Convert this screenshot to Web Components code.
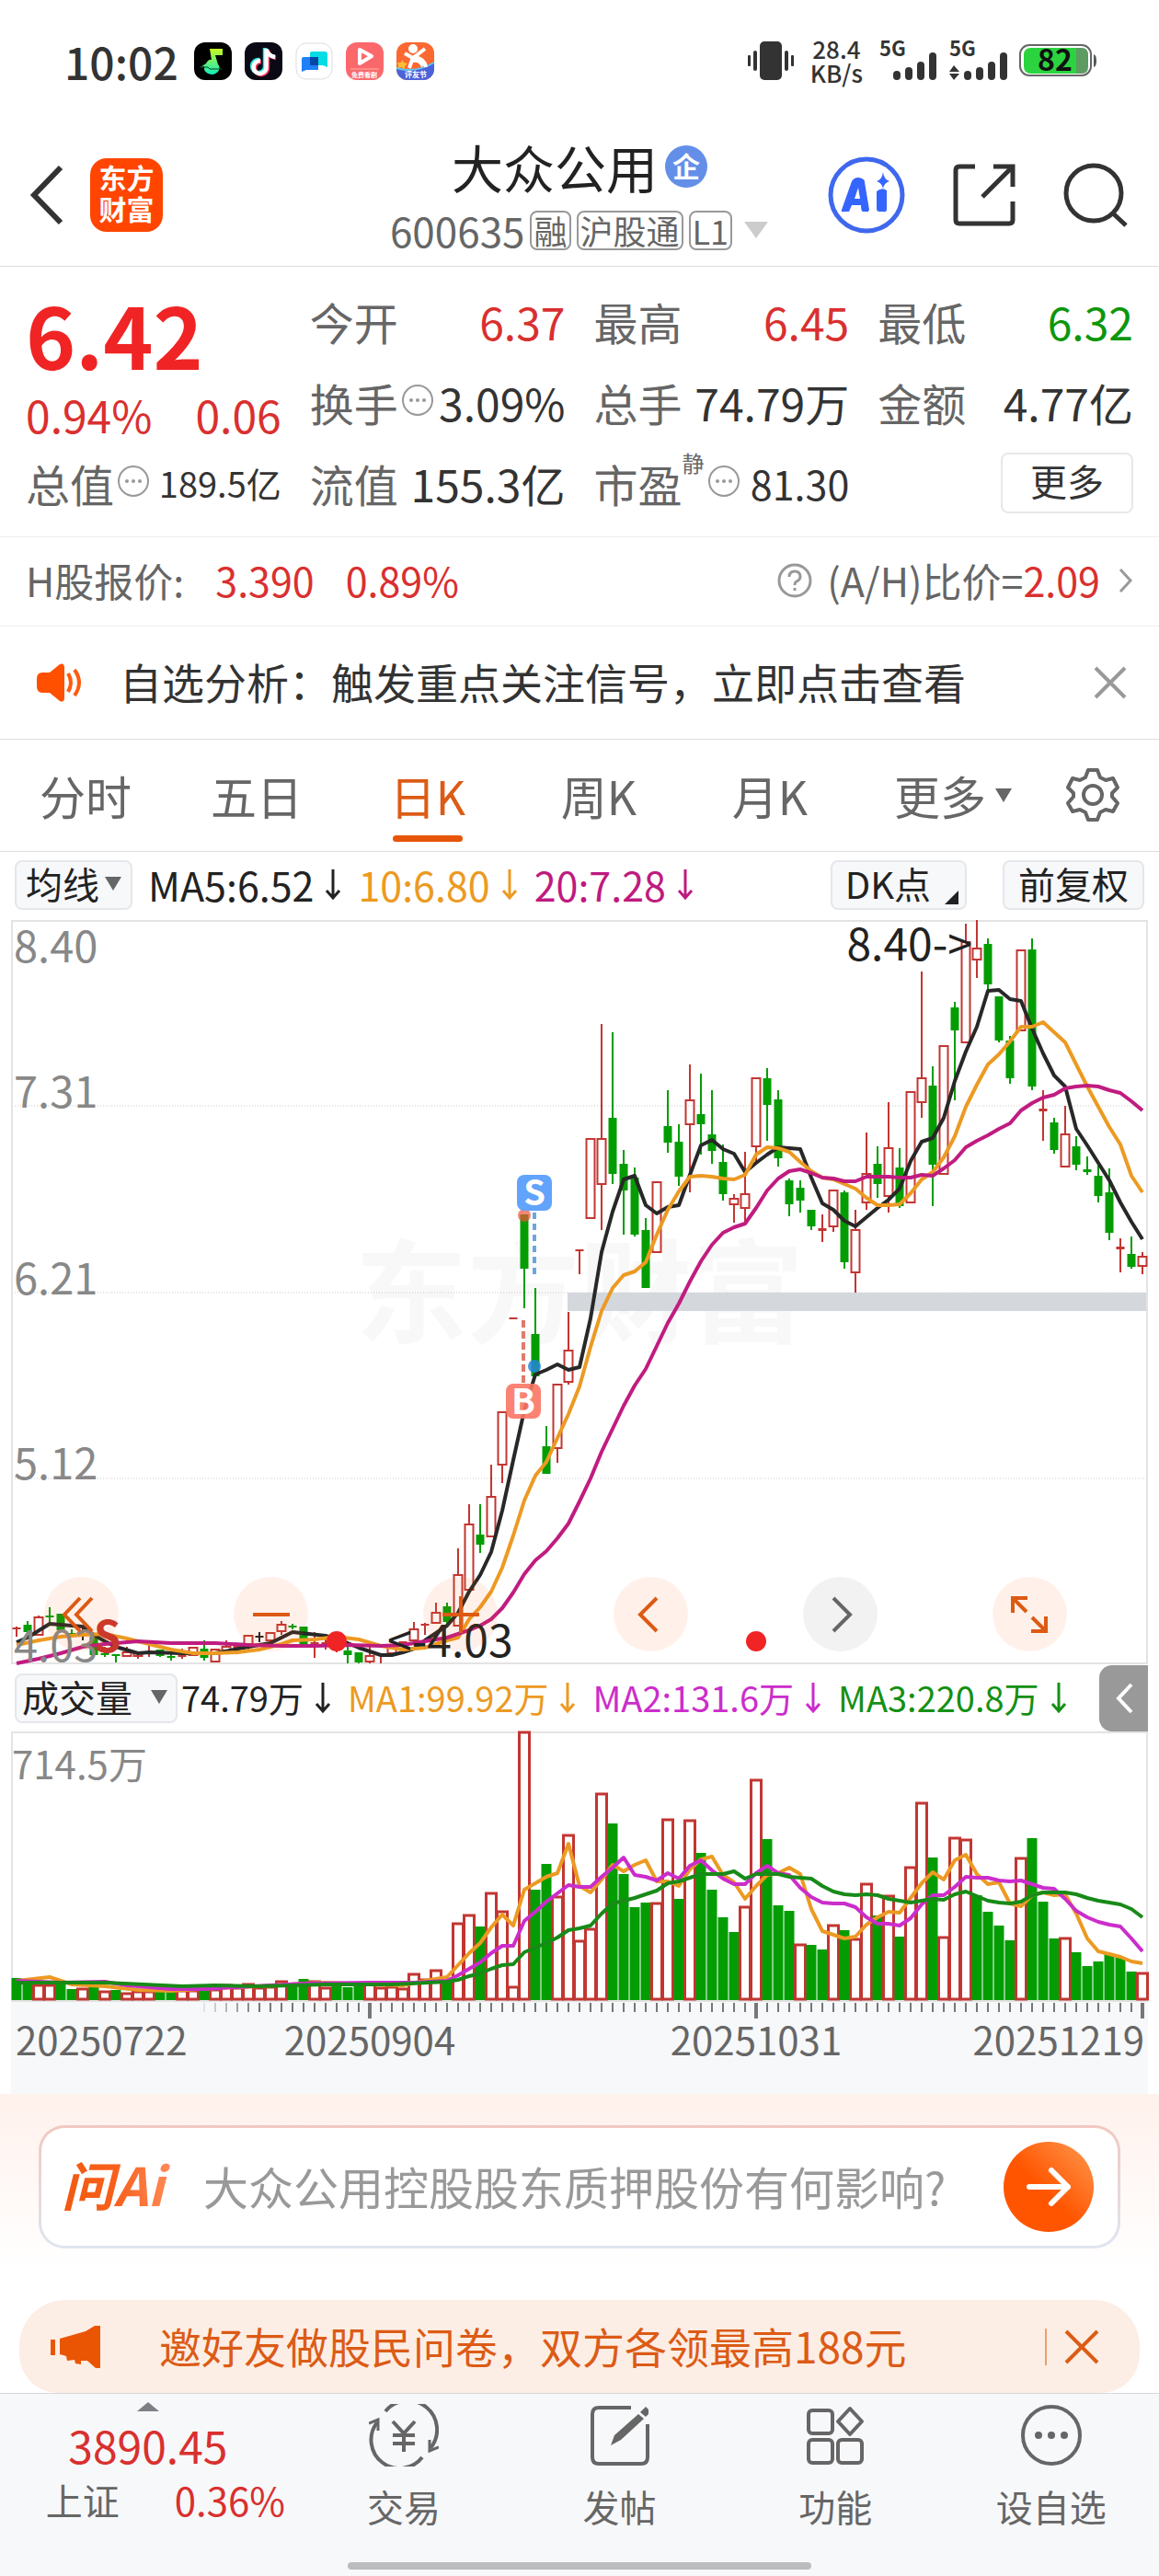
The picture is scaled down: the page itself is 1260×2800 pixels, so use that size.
<!DOCTYPE html>
<html lang="zh-CN">
<head>
<meta charset="utf-8">
<meta name="viewport" content="width=device-width, initial-scale=1">
<title>大众公用 600635</title>
<style>
    body {
        margin: 0;
        background: #fff;
        color: #333;
        font-family: "Noto Sans CJK SC", "Noto Sans", sans-serif;
        --up: #d9302f;
        --down: #0c960c;
        --label: #666;
        --accent: #dc5b16;
        --line: #ddd;
        --soft: #f7f8fa;
    }
</style>
</head>
<body>
<status-bar></status-bar>
<stock-header name="大众公用" code="600635"></stock-header>
<main>
    <quote-panel>
        <quote-item label="今开" tone="up">6.37</quote-item>
        <quote-item label="最高" tone="up">6.45</quote-item>
        <quote-item label="最低" tone="down">6.32</quote-item>
        <quote-item label="换手" info>3.09%</quote-item>
        <quote-item label="总手">74.79万</quote-item>
        <quote-item label="金额">4.77亿</quote-item>
        <quote-item label="总值" size="small" info>189.5亿</quote-item>
        <quote-item label="流值">155.3亿</quote-item>
        <quote-item label="市盈" note="静" size="medium" info>81.30</quote-item>
    </quote-panel>
    <h-share-row></h-share-row>
    <notice-bar>自选分析：触发重点关注信号，立即点击查看</notice-bar>
    <period-tabs></period-tabs>
    <ma-legend></ma-legend>
    <kline-chart></kline-chart>
    <volume-legend></volume-legend>
    <volume-chart></volume-chart>
    <ask-bar></ask-bar>
    <promo-banner>邀好友做股民问卷，双方各领最高188元</promo-banner>
</main>
<bottom-nav>
    <nav-item label="交易">
        <svg width="76" height="68" viewBox="0 0 76 68" fill="none" stroke="#666" stroke-width="4">
            <path d="M18 8A31 31 0 0 1 67 48M58 58A31 31 0 0 1 9 20"/>
            <path d="M0 21L10 17V29M76 47L66 51V39" stroke-width="3"/>
            <path d="M26 19L38 32L50 19M38 32V52M26 34H50M26 43H50"/>
        </svg>
    </nav-item>
    <nav-item label="发帖">
        <svg width="66" height="68" viewBox="0 0 66 68" fill="none" stroke="#666" stroke-width="4">
            <path d="M45 4H10Q3 4 3 11V58Q3 65 10 65H56Q63 65 63 58V22"/>
            <path d="M23 45L27 34L53 11L59 16L34 39Z" fill="#666" stroke="none"/>
            <path d="M55 9L61 3L64 6V11L61 14Z" fill="#666" stroke="none"/>
        </svg>
    </nav-item>
    <nav-item label="功能">
        <svg width="64" height="68" viewBox="0 0 64 68" fill="none" stroke="#666" stroke-width="4">
            <rect x="3" y="7" width="26" height="25" rx="4"/>
            <rect x="3" y="39" width="26" height="25" rx="4"/>
            <rect x="35" y="39" width="26" height="25" rx="4"/>
            <path d="M48 5L61 19L48 33L35 19Z" stroke-linejoin="round"/>
        </svg>
    </nav-item>
    <nav-item label="设自选">
        <svg width="68" height="68" viewBox="0 0 68 68">
            <circle cx="34" cy="34" r="31" fill="none" stroke="#666" stroke-width="4"/>
            <g fill="#666"><circle cx="20" cy="34" r="4"/><circle cx="34" cy="34" r="4"/><circle cx="48" cy="34" r="4"/></g>
        </svg>
    </nav-item>
</bottom-nav>

<script>
const baseStyle = `
    :host { display: block; }
    * { box-sizing: border-box; }
    button { font: inherit; color: inherit; background: none; border: 0; padding: 0; margin: 0; cursor: pointer; }
    svg { display: block; flex: none; overflow: visible; }
`;

class BaseElement extends HTMLElement {

    constructor () {
        super ();
        this.attachShadow ({mode: "open"});
    }

    connectedCallback () {
        const template = document.createElement ("template");
        template.innerHTML = "<style>" + baseStyle + this.styles () + "</style>" + this.markup ();
        this.shadowRoot.replaceChildren (template.content.cloneNode (true));
    }

    attr (name) {
        return this.getAttribute (name) || "";
    }

    styles () { return ""; }
    markup () { return ""; }
}

/* ---------- status bar ---------- */

class StatusBar extends BaseElement {

    styles () {
        return `
            :host { padding: 37px 68px 36px 70px; }
            .bar, .apps, .right { display: flex; align-items: center; }
            .bar { justify-content: space-between; line-height: 58px; }
            time { font-size: 48px; font-weight: 500; margin-right: 3px; }
            .apps { gap: 14px; }
            .right { gap: 12px; }
            .speed { font-size: 26px; font-weight: 500; line-height: 26px; text-align: center; margin: 0 6px; }
        `;
    }

    bars (x) {
        return [20, 16, 10, 0].map ((y, n) =>
            `<rect x="${x + n * 13}" y="${y + 12}" width="8" height="${30 - y}" rx="4"/>`).join ("");
    }

    markup () {
        return `
            <div class="bar">
                <div class="apps">
                    <time>10:02</time>
                    <svg width="41" height="41" viewBox="0 0 41 41">
                        <defs><linearGradient id="g" x2="0" y2="1"><stop stop-color="#c8f520"/><stop offset="1" stop-color="#10eec0"/></linearGradient></defs>
                        <rect width="41" height="41" rx="12"/>
                        <path d="M17 7H31V14H23L26 24C30 28 26 35 19 35Q10 34 11 26L7 27L13 23Q16 18 19 19Z" fill="url(#g)"/>
                        <path d="M6 27H15L17 29H31" stroke="#042" fill="none"/>
                    </svg>
                    <svg width="41" height="41" viewBox="0 0 41 41" fill="none" stroke-width="4.5">
                        <rect width="41" height="41" rx="12" fill="#0b0914"/>
                        <path d="M22 6V25A7 7 0 1 1 16 19M22 7Q25 15 33 16" stroke="#26e8e6"/>
                        <path d="M25 8V27A7 7 0 1 1 18 21M25 9Q27 16 34 17" stroke="#f5325b"/>
                        <path d="M23.5 7V26A7 7 0 1 1 17 20M23.5 8Q26 15 33 16" stroke="#fff"/>
                    </svg>
                    <svg width="41" height="41" viewBox="0 0 41 41">
                        <rect x="1" y="1" width="39" height="39" rx="11" fill="#fff" stroke="#ddd"/>
                        <path d="M18 10H32Q35 10 35 13V27L30 25H16V12Q16 10 18 10Z" fill="#06dce4"/>
                        <path d="M9 16H25V30H12L7 32V18Q7 16 9 16Z" fill="#1f80fa"/>
                        <path d="M16 16H25V25H16Z" fill="#0546a8"/>
                    </svg>
                    <svg width="41" height="41" viewBox="0 0 41 41">
                        <rect width="41" height="41" rx="12" fill="#fb686c"/>
                        <path d="M15 8L28 15L15 23Z" fill="none" stroke="#fff" stroke-width="4" stroke-linejoin="round"/>
                        <path d="M5 29H36" stroke="#ffb0a0"/>
                        <text x="20" y="38" font-size="7" font-weight="700" fill="#fff" text-anchor="middle">免费看剧</text>
                    </svg>
                    <svg width="41" height="41" viewBox="0 0 41 41">
                        <rect width="41" height="41" rx="12" fill="#fb6832"/>
                        <path d="M0 28Q20 35 41 22V29A12 12 0 0 1 29 41H12A12 12 0 0 1 0 29Z" fill="#4b62da"/>
                        <path d="M0 28Q20 34 41 22" stroke="#5cc8f5" stroke-width="2" fill="none"/>
                        <circle cx="18" cy="7" r="5" fill="#fff"/>
                        <path d="M9 12L18 17L31 7M18 16L14 28M20 16Q31 18 32 27M18 20Q25 18 29 26" stroke="#fff" stroke-width="4" fill="none"/>
                        <path d="M6 19L8 22L12 23L9 26L9 29L5 27L2 28V25L1 22H5Z" fill="#ffbd38"/>
                        <text x="21" y="38" font-size="8" font-weight="700" fill="#fff" text-anchor="middle">评友节</text>
                    </svg>
                </div>
                <div class="right">
                    <svg width="50" height="42" viewBox="0 0 50 42" fill="#333">
                        <rect x="13" width="24" height="42" rx="5"/>
                        <rect x="6" y="10" width="4" height="22" rx="2"/><rect x="40" y="10" width="4" height="22" rx="2"/>
                        <rect y="15" width="3" height="12" rx="1"/><rect x="47" y="15" width="3" height="12" rx="1"/>
                    </svg>
                    <div class="speed">28.4<br>KB/s</div>
                    <svg width="64" height="42" viewBox="0 0 64 42" fill="#333">
                        <text y="16" font-size="22" font-weight="700">5G</text>${this.bars (15)}
                    </svg>
                    <svg width="64" height="42" viewBox="0 0 64 42" fill="#333">
                        <text y="16" font-size="22" font-weight="700">5G</text>
                        <path d="M5 26L11 33H0ZM5 42L11 35H0Z"/>${this.bars (16)}
                    </svg>
                    <svg width="84" height="36" viewBox="0 0 84 36">
                        <rect x="1" y="1" width="77" height="33" rx="10" fill="#fff" stroke="#666" stroke-width="2"/>
                        <path d="M13 4H62V32H13Q5 32 5 24V12Q5 4 13 4Z" fill="#2bd43f"/>
                        <path d="M62 4H68Q75 4 75 12V24Q75 32 68 32H62Z" fill="#5d9b62"/>
                        <path d="M81 11Q84 12 84 18T81 25Z" fill="#555"/>
                        <text x="39" y="29" font-size="32" font-weight="700" text-anchor="middle" fill="#111">82</text>
                    </svg>
                </div>
            </div>
        `;
    }
}

/* ---------- header ---------- */

class StockHeader extends BaseElement {

    styles () {
        return `
            header { display: grid; grid-template-columns: 1fr auto 1fr; align-items: center; padding: 9px 33px 5px; border-bottom: 1px solid var(--line); }
            .left, .right, .name, .code { display: flex; align-items: center; }
            .left { gap: 29px; }
            .right { gap: 52px; justify-content: flex-end; }
            .title { padding-top: 6px; }
            .name { justify-content: center; gap: 8px; line-height: 70px; }
            h1 { margin: 0; font-size: 56px; font-weight: 400; color: #222; }
            .badge { width: 46px; height: 46px; border-radius: 50%; background: #638fe8; color: #fff; font-size: 30px; font-weight: 700; line-height: 42px; text-align: center; }
            .code { justify-content: center; gap: 6px; color: var(--label); font-size: 44px; line-height: 68px; }
            .tag { border: 2px solid #999; border-radius: 8px; font-size: 36px; line-height: 39px; padding: 0 2px; }
            .logo { width: 79px; border-radius: 18px; background: #ff4500; color: #fff; font-size: 30px; font-weight: 700; line-height: 34px; padding: 3px 0 9px; text-align: center; }
        `;
    }

    markup () {
        return `
            <header>
                <div class="left">
                    <button aria-label="返回"><svg width="36" height="66" viewBox="0 0 36 66" fill="none" stroke="#333" stroke-width="6"><path d="M33 3L4 33L33 63"/></svg></button>
                    <div class="logo">东方<br>财富</div>
                </div>
                <div class="title">
                    <div class="name"><h1>${this.attr ("name")}</h1><span class="badge">企</span></div>
                    <div class="code">
                        <span>${this.attr ("code")}</span>
                        <span class="tag">融</span><span class="tag">沪股通</span><span class="tag">L1</span>
                        <svg width="34" height="20" viewBox="0 0 34 20"><path d="M7 1H33L20 19Z" fill="#ccc"/></svg>
                    </div>
                </div>
                <div class="right">
                    <button aria-label="Ai">
                        <svg width="84" height="84" viewBox="0 0 84 84">
                            <circle cx="42" cy="42" r="39" fill="none" stroke="#3f68ee" stroke-width="5"/>
                            <path d="M15 58L26 27Q30 21 37 24Q40 25 40 28L45 58Q44 61 41 60H38Q36 60 36 53H26L23 60H18Q14 61 15 58ZM29 46H35L33 34Z" fill="#3565ff"/>
                            <path d="M53 38Q59 33 64 37V57Q64 61 60 60H56Q53 60 53 57Z" fill="#3565ff"/>
                            <path d="M60 17Q61 25 67 27Q61 29 60 35Q59 29 53 27Q59 25 60 17Z" fill="#3565ff"/>
                        </svg>
                    </button>
                    <button aria-label="分享">
                        <svg width="68" height="70" viewBox="0 0 68 70" fill="none" stroke="#333" stroke-width="5">
                            <path d="M24 4H7Q3 4 3 8V62Q3 66 7 66H61Q65 66 65 62V42M44 4H65V26M65 4L32 37"/>
                        </svg>
                    </button>
                    <button aria-label="搜索">
                        <svg width="71" height="70" viewBox="0 0 71 70" fill="none" stroke="#333" stroke-width="5">
                            <circle cx="33" cy="33" r="30"/><path d="M53 54L68 68"/>
                        </svg>
                    </button>
                </div>
            </header>
        `;
    }
}

/* ---------- quotes ---------- */

const infoIcon = `
    <svg width="36" height="36" viewBox="0 0 36 36">
        <circle cx="18" cy="18" r="16" fill="none" stroke="#999" stroke-width="2"/>
        <g fill="#999"><circle cx="11" cy="18" r="2"/><circle cx="18" cy="18" r="2"/><circle cx="25" cy="18" r="2"/></g>
    </svg>`;

class QuoteItem extends BaseElement {

    styles () {
        return `
            :host { display: flex; align-items: center; font-size: 48px; line-height: 88px; white-space: nowrap; }
            .label { color: var(--label); }
            sup { align-self: flex-start; font-size: 24px; line-height: 44px; color: var(--label); }
            svg { margin: 0 0 4px 3px; }
            .value { margin-left: auto; }
            :host([tone="up"]) .value { color: var(--up); }
            :host([tone="down"]) .value { color: var(--down); }
            :host([size="small"]) .value { font-size: 38px; }
            :host([size="medium"]) .value { font-size: 43px; }
        `;
    }

    markup () {
        const note = this.hasAttribute ("note") ? `<sup>${this.attr ("note")}</sup>` : "";
        return `
            <span class="label">${this.attr ("label")}</span>${note}
            ${this.hasAttribute ("info") ? infoIcon : ""}
            <span class="value"><slot></slot></span>
        `;
    }
}

class QuotePanel extends BaseElement {

    styles () {
        return `
            section { display: grid; grid-template-columns: repeat(4, 1fr); column-gap: 31px; padding: 15px 28px 14px; border-bottom: 1px solid #eee; }
            .last { grid-row: span 2; color: var(--up); }
            .price { font-size: 92px; font-weight: 700; line-height: 114px; color: #f02424; }
            .change { display: flex; justify-content: space-between; font-size: 48px; line-height: 62px; }
            .more { grid-area: 3 / 4; justify-self: end; align-self: center; font-size: 40px; line-height: 56px; padding: 0 30px 6px; border: 2px solid #e8e8e8; border-radius: 8px; }
        `;
    }

    markup () {
        return `
            <section>
                <div class="last">
                    <div class="price">6.42</div>
                    <div class="change"><span>0.94%</span><span>0.06</span></div>
                </div>
                <slot></slot>
                <button class="more">更多</button>
            </section>
        `;
    }
}

class HShareRow extends BaseElement {

    styles () {
        return `
            .row { display: flex; align-items: center; padding: 0 28px 3px; font-size: 43px; line-height: 93px; color: var(--label); border-bottom: 1px solid #eee; }
            b { font-weight: 400; color: var(--up); }
            .h { display: flex; gap: 34px; }
            a { display: flex; align-items: center; margin-left: auto; color: inherit; text-decoration: none; }
            a svg:first-child { margin-right: 16px; }
            a svg:last-child { margin-left: 20px; }
        `;
    }

    markup () {
        return `
            <div class="row">
                <div class="h"><span>H股报价:</span><b>3.390</b><b>0.89%</b></div>
                <a href="#ah">
                    <svg width="38" height="38" viewBox="0 0 38 38" fill="none" stroke="#999" stroke-width="3">
                        <circle cx="19" cy="19" r="17"/><path d="M13 15Q13 9 19 9T25 15Q25 18 21 20Q19 21 19 24M19 27V30"/>
                    </svg>
                    <span>(A/H)比价=<b>2.09</b></span>
                    <svg width="16" height="28" viewBox="0 0 16 28" fill="none" stroke="#999" stroke-width="3"><path d="M2 2L13 14L2 26"/></svg>
                </a>
            </div>
        `;
    }
}

class NoticeBar extends BaseElement {

    styles () {
        return `
            .row { display: flex; align-items: center; padding: 0 35px 0 39px; font-size: 46px; line-height: 118px; border-bottom: 1px solid var(--line); }
            .text { margin-left: 39px; margin-right: auto; padding-bottom: 4px; }
        `;
    }

    markup () {
        return `
            <div class="row">
                <svg width="52" height="42" viewBox="0 0 52 42">
                    <path d="M7 10H15L26 1Q31-1 31 5V37Q31 43 26 41L15 32H7Q1 32 1 25V17Q1 10 7 10Z" fill="#ff5000"/>
                    <path d="M35 11Q41 21 35 31M42 7Q52 21 42 35" fill="none" stroke="#ff5a10" stroke-width="4"/>
                </svg>
                <span class="text"><slot></slot></span>
                <button aria-label="关闭"><svg width="36" height="36" viewBox="0 0 36 36" stroke="#999" stroke-width="4"><path d="M2 2L34 34M34 2L2 34"/></svg></button>
            </div>
        `;
    }
}

class PeriodTabs extends BaseElement {

    styles () {
        return `
            nav { display: grid; grid-template-columns: repeat(6, 186fr) 144fr; justify-items: center; align-items: center; border-bottom: 1px solid var(--line); }
            button { position: relative; display: flex; align-items: center; gap: 10px; font-size: 50px; line-height: 120px; padding-bottom: 1px; color: var(--label); }
            .active { color: var(--accent); }
            .active::after { content: ""; position: absolute; left: 3px; right: 3px; bottom: 10px; height: 7px; border-radius: 4px; background: #e65508; }
            .more { margin-left: 26px; }
        `;
    }

    markup () {
        const tabs = ["分时", "五日", "日K", "周K", "月K"].map (t =>
            `<button${t === "日K" ? ' class="active"' : ""}>${t}</button>`).join ("");
        return `
            <nav>
                ${tabs}
                <button class="more">更多<svg width="18" height="15" viewBox="0 0 18 15"><path d="M0 0H18L9 15Z" fill="#666"/></svg></button>
                <button aria-label="设置">
                    <svg width="60" height="60" viewBox="0 0 60 60" fill="none" stroke="#666" stroke-width="4" stroke-linejoin="round">
                        <path d="M25 3H35L38 11L44 14L52 12L57 22L51 28V32L57 39L52 48L44 46L38 49L35 57H25L22 49L16 46L8 48L3 39L9 32V28L3 22L8 12L16 14L22 11Z"/>
                        <circle cx="30" cy="30" r="10"/>
                    </svg>
                </button>
            </nav>
        `;
    }
}

/* ---------- chart legends ---------- */

const legendStyle = `
    .row { display: flex; align-items: center; padding: 0 16px; }
    .pick { display: flex; align-items: center; font-size: 40px; line-height: 46px; padding: 0 12px 4px; border: 2px solid #e5e7ea; border-radius: 8px; background: var(--soft); color: #222; white-space: nowrap; }
    .value { display: flex; align-items: center; white-space: nowrap; }
`;

function legendValue (text, color) {
    return `<span class="value" style="color: ${color}">${text}<svg width="18" height="36" viewBox="0 0 18 36" fill="none" stroke="currentColor" stroke-width="3"><path d="M9 2V33M2 25L9 33L16 25"/></svg></span>`;
}

const caret = `<svg width="18" height="15" viewBox="0 0 18 15"><path d="M0 0H18L9 15Z" fill="#666"/></svg>`;

class MaLegend extends BaseElement {

    styles () {
        return legendStyle + `
            .row { padding-top: 9px; padding-bottom: 11px; }
            .pick svg { margin-left: 6px; }
            .pick:first-child { padding-left: 10px; padding-right: 10px; }
            .values { display: flex; gap: 18px; margin-left: 17px; margin-right: auto; font-size: 43px; line-height: 50px; padding-bottom: 3px; }
            .value { gap: 12px; }
            .corner { align-self: flex-end; }
            .dk { margin-right: 39px; padding-left: 14px; padding-right: 7px; }
            .fq { padding-left: 15px; padding-right: 15px; }
        `;
    }

    markup () {
        return `
            <div class="row">
                <button class="pick">均线${caret}</button>
                <div class="values">
                    ${legendValue ("MA5:6.52", "#222")}
                    ${legendValue ("10:6.80", "#ec9a22")}
                    ${legendValue ("20:7.28", "#bf1a80")}
                </div>
                <button class="pick dk">DK点<svg class="corner" width="24" height="15" viewBox="0 0 24 15"><path d="M9 15H24V0Z" fill="#222"/></svg></button>
                <button class="pick fq">前复权</button>
            </div>
        `;
    }
}

class VolumeLegend extends BaseElement {

    styles () {
        return legendStyle + `
            .row { padding: 0 12px 0 16px; }
            .pick { padding-left: 6px; padding-right: 9px; gap: 20px; }
            .values { display: flex; gap: 18px; margin-left: 4px; margin-right: auto; font-size: 38px; line-height: 66px; padding-bottom: 3px; }
            .value { gap: 12px; }
            .fold { padding: 17px 16px 17px 18px; background: #999; border-radius: 14px 0 0 14px; }
        `;
    }

    markup () {
        return `
            <div class="row">
                <button class="pick">成交量${caret}</button>
                <div class="values">
                    ${legendValue ("74.79万", "#222")}
                    ${legendValue ("MA1:99.92万", "#ec9a22")}
                    ${legendValue ("MA2:131.6万", "#cb2dcb")}
                    ${legendValue ("MA3:220.8万", "#149014")}
                </div>
                <button class="fold" aria-label="收起"><svg width="19" height="38" viewBox="0 0 19 38" fill="none" stroke="#fff" stroke-width="4"><path d="M17 4L3 19L17 34"/></svg></button>
            </div>
        `;
    }
}

/* ---------- charts ---------- */

const STEP = 12;
const UP = "#c23632";
const DOWN = "#039d03";

// one entry per day: colour, high, low, body top, body bottom
const candles = `
r768,779,769,771 g762,780,766,774 r756,778,758,777 g747,763,756,758 g754,772,754,772 g771,780,775,777 k768,783,775,777 g779,799,779,799
g790,801,797,799 g798,807,798,800 r790,801,796,800 r796,803,796,800 r787,801,795,797 g793,801,793,800 g797,805,800,802 r792,803,799,801
r791,799,791,799 g783,805,792,802 r793,806,793,806 r783,794,790,794 r786,792,789,792 r778,796,778,787 k774,785,778,780 r775,785,775,783
r762,777,766,773 g765,771,767,769 g768,791,768,791 r774,802,785,787 r782,793,785,787 r780,796,780,792 g789,808,794,799 g796,808,796,807
r790,808,800,806 r797,808,797,799 r788,797,788,797 r784,787,784,787 r763,785,771,783 r764,777,765,767 r742,764,753,764 g742,765,746,763
r683,768,712,767 r635,728,657,728 g635,688,668,679 r592,670,627,670 r535,612,535,592 r432,434,432,434 g320,422,320,379 g400,496,450,496
g550,602,572,602 r505,590,505,574 r426,505,468,502 r359,385,358,360 r238,324,238,324 r113,337,238,287 g122,287,215,276 g250,342,265,294
g269,344,280,342 g324,400,337,400 r285,361,285,361 g185,253,224,242 g222,289,241,279 r157,296,196,222 g167,255,211,222 g185,265,233,251
g244,305,263,298 r298,329,303,309 r252,330,298,313 r172,263,172,246 g161,240,172,201 g185,268,195,259 g281,322,283,309 g283,318,291,305
g315,337,315,333 r320,350,335,338 r294,339,294,333 g294,379,296,372 r315,405,337,383 r231,315,276,307 g246,302,265,287 r198,318,248,300
g248,313,269,311 r187,307,187,307 r56,215,172,198 g159,311,180,266 r137,276,137,276 g89,196,95,120 r4,133,24,133 r0,63,31,43
g20,77,26,70 g83,133,83,131 g126,178,131,172 r33,120,33,120 g20,185,32,181 r185,240,205,208 g215,254,220,250 r202,268,233,268
g235,272,246,266 g257,277,271,274 g267,307,278,300 g270,348,296,340 r346,383,355,358 g344,379,363,377 r361,385,366,376`;

const ma5 = `0,785 1,780 3,765 6,768 7,777 8,784 9,790 11,797 12,796 15,797 18,797 21,790 23,786 25,774 28,778 29,782 30,786 31,791 32,795 33,799 34,799 35,796 36,792 37,783 38,775 39,767
40,753 41,730 42,712 43,687 44,642 45,587 46,533 47,494 48,489 49,483 50,489 51,486 52,433 53,361 54,317 55,282 56,278 57,310 58,319 59,312 60,310 61,277 62,245 63,239 64,249 65,254
66,274 67,264 68,255 69,247 70,248 71,249 72,280 73,308 74,315 75,327 76,333 77,323 78,313 79,304 80,292 81,262 82,241 83,237 84,215 85,175 86,143 87,116 88,77 89,76 90,86 91,88
92,118 93,145 94,169 95,181 96,227 97,245 98,264 99,283 100,307 101,328 102,347`;

const ma10 = `0,788 2,783 4,779 6,777 8,776 10,781 12,787 14,793 16,797 18,797 20,796 22,793 24,787 25,783 27,782 29,779 31,782 33,789 35,793 37,791 39,783 40,780 41,760 42,747 43,730
44,704 45,669 46,631 47,604 48,589 49,563 50,537 51,507 52,464 53,425 54,400 55,386 56,382 57,372 58,342 59,315 60,295 61,279 62,278 63,279 64,281 65,282 66,277 67,255 68,247 69,248
70,252 71,263 72,273 73,280 74,282 75,287 76,292 77,302 78,310 79,310 80,309 81,297 82,282 83,274 84,258 85,235 86,203 87,179 88,157 89,146 90,132 91,116 92,116 93,111 94,122 95,133
96,157 97,181 98,203 99,225 100,244 101,278 102,296`;

const ma20 = `0,808 2,803 4,797 6,790 8,787 11,784 14,786 18,786 21,788 24,789 27,789 30,788 33,789 35,788 37,784 39,780 41,772 42,767 43,760 44,748 45,731 46,711 47,696 48,686 49,672
50,656 51,632 52,607 53,578 54,553 55,528 56,506 57,488 58,463 59,438 60,417 61,393 62,371 63,353 64,340 65,334 66,330 67,313 68,294 69,281 70,273 71,271 72,275 73,280 74,281 75,284
76,284 77,279 78,279 79,279 80,280 81,280 82,277 83,278 84,270 85,261 86,247 87,240 88,234 89,227 90,221 91,207 92,199 93,193 94,190 95,183 96,181 97,180 98,181 99,185 100,188
101,197 102,207`;

// one entry per day: colour, top of the bar
const volumes = `
g268 g275 r275 r275 g275 g280 r279 g275 r282 g281 r284 r282 r282 g283 g282 r281 r281 g281 r280 r275 r278 r274 r278 r277 r271 g277 g269 r271 r278 g277 g278 g276
r273 r278 r277 r279 r263 r269 r259 g271 r208 r199 g212 r175 r195 r277 r0 g172 g144 r179 r112 r227 r214 r67 g100 g155 g191 g186 r186 r95 g182 r96 g132 g172
g202 g218 r190 r52 g117 g189 g195 r231 g232 g237 r210 g216 r225 r165 g200 r178 g223 r147 r77 g137 r223 r115 r117 g178 g196 g211 g227 r137 g116 g185 g225 r224
g240 g255 g250 g242 g245 g261 r262`;

const vol5 = `0,271 3,267 5,275 8,277 11,281 14,282 18,279 22,277 26,274 28,273 32,275 35,276 37,271 39,267 40,254 41,241 42,230 43,213 44,199 45,211 46,172 47,165 48,158 49,154 50,122
51,168 52,175 53,161 54,145 55,152 56,145 57,140 58,163 59,163 60,168 61,150 62,139 63,136 64,156 65,164 66,182 67,168 68,156 69,154 70,148 71,155 72,193 73,217 74,221 75,225 76,223
77,210 78,202 79,196 80,197 81,181 82,165 83,153 84,161 85,140 86,134 87,155 88,166 89,164 90,187 91,190 92,178 93,175 94,178 95,177 96,198 97,225 98,239 99,242 100,245 101,250 102,252`;

const vol10 = `0,271 4,273 8,272 10,276 14,280 17,280 20,278 26,274 32,273 36,273 39,271 40,265 41,258 42,251 43,241 44,233 45,233 46,206 47,196 48,185 49,176 50,167 51,169 52,169 53,158
54,148 55,137 56,156 57,158 58,162 59,154 60,160 61,146 62,140 63,151 64,160 65,166 66,166 67,154 68,146 69,154 70,156 71,170 72,180 73,186 74,187 75,187 76,191 77,202 78,209 79,209
80,211 81,203 82,188 83,178 84,178 85,169 86,158 87,159 88,159 89,162 90,163 91,162 92,166 93,170 94,171 95,182 96,195 97,202 98,207 99,210 100,212 101,225 102,239`;

const vol20 = `0,273 8,273 15,277 18,276 22,277 28,275 34,275 39,272 40,270 41,266 42,263 43,258 44,254 45,253 46,240 47,235 48,230 49,224 50,216 51,214 52,211 53,198 54,187 55,184 56,181
57,177 58,173 59,165 60,163 61,159 62,155 64,155 65,152 66,160 67,155 69,155 70,158 71,159 72,160 73,168 74,174 75,177 76,178 77,177 78,178 79,182 80,184 81,186 82,184 83,182 84,183
85,177 86,174 87,179 88,184 89,186 90,187 91,185 92,178 93,175 95,175 96,177 97,181 98,184 99,186 100,188 101,193 102,202`;

function dayX (i) {
    return 6 + STEP * i;
}

function linePath (points, color) {
    const list = points.trim ().split (/\s+/).map (p => {
        const [i, y] = p.split (",").map (Number);
        return dayX (i) + "," + y;
    });
    return `<polyline points="${list.join (" ")}" fill="none" stroke="${color}" stroke-width="4" stroke-linejoin="round"/>`;
}

function candleShapes () {
    return candles.trim ().split (/\s+/).map ((entry, i) => {
        const color = {r: UP, g: DOWN, k: "#222"}[entry[0]];
        const [high, low, top, bottom] = entry.slice (1).split (",").map (Number);
        const x = dayX (i);
        if (entry[0] !== "r" || bottom - top < 4) {
            return `<path d="M${x} ${high}V${low}" stroke="${color}" stroke-width="2"/>
                <rect x="${x - 4.5}" y="${top}" width="9" height="${bottom - top}" fill="${color}"/>`;
        }
        return `<path d="M${x} ${high}V${top}M${x} ${bottom}V${low}" stroke="${color}" stroke-width="2"/>
            <rect x="${x - 4.5}" y="${top}" width="9" height="${bottom - top}" fill="none" stroke="${color}" stroke-width="2"/>`;
    }).join ("");
}

function volumeShapes () {
    return volumes.trim ().split (/\s+/).map ((entry, i) => {
        const top = Number (entry.slice (1));
        const x = dayX (i);
        if (entry[0] === "g") {
            return `<rect x="${x - 5.5}" y="${top}" width="11" height="${292 - top}" fill="${DOWN}"/>`;
        }
        return `<rect x="${x - 5.5}" y="${top + 1}" width="11" height="${290 - top}" fill="#fff" stroke="${UP}" stroke-width="3"/>`;
    }).join ("");
}

class KlineChart extends BaseElement {

    styles () {
        return `
            :host { position: relative; padding: 0 12px; }
            .plot { width: 100%; height: auto; }
            .tools { position: absolute; left: 48px; right: 100px; bottom: 15px; display: flex; justify-content: space-between; }
            .tools button { width: 81px; height: 81px; border-radius: 50%; background: rgba(255, 100, 20, .09); display: flex; align-items: center; justify-content: center; color: #dd5a14; }
            .tools .off { background: rgba(0, 0, 0, .05); color: #666; }
        `;
    }

    tool (name, d, off) {
        return `<button aria-label="${name}"${off ? ' class="off"' : ""}><svg width="40" height="40" viewBox="0 0 40 40" fill="none" stroke="currentColor" stroke-width="4"><path d="${d}"/></svg></button>`;
    }

    markup () {
        return `
            <svg class="plot" viewBox="0 0 1236 810">
                <text x="374" y="450" font-size="122" font-weight="700" fill="#f8f8f8">东方财富</text>
                <path d="M1 202H1235M1 405H1235M1 607H1235" stroke="#ccc" stroke-dasharray="1 2"/>
                <rect x="605" y="405" width="630" height="20" fill="#d4d7dc"/>
                <rect x="1" y="1" width="1234" height="807" fill="none" stroke="#e3e3e3" stroke-width="2"/>
                ${candleShapes ()}
                <circle cx="558" cy="321" r="7" fill="#f0523c" fill-opacity=".7"/>
                <circle cx="569" cy="485" r="7" fill="#2486dc" fill-opacity=".85"/>
                <path d="M569 318V385" stroke="#6fa5de" stroke-width="4" stroke-dasharray="7 5"/>
                <path d="M557 435V504" stroke="#e07a6c" stroke-width="4" stroke-dasharray="8 4"/>
                <rect x="550" y="277" width="38" height="39" rx="8" fill="#62a3fb"/>
                <text x="569" y="310" font-size="38" font-weight="700" fill="#fff" text-anchor="middle">S</text>
                ${linePath (ma5, "#282828")}
                ${linePath (ma10, "#ec9a22")}
                ${linePath (ma20, "#c01c80")}
                <rect x="538" y="504" width="38" height="38" rx="8" fill="#fb7565" fill-opacity=".9"/>
                <text x="557" y="537" font-size="38" font-weight="700" fill="#fff" text-anchor="middle">B</text>
                <g font-size="47" fill="#888">
                    <text x="3" y="46">8.40</text>
                    <text x="3" y="204">7.31</text>
                    <text x="3" y="407">6.21</text>
                    <text x="3" y="608">5.12</text>
                    <text x="3" y="806">4.03</text>
                </g>
                <text x="90" y="796" font-size="47" font-weight="700" fill="#c8352b">S</text>
                <g font-size="48" fill="#222">
                    <text x="1045" y="44" text-anchor="end">8.40-&gt;</text>
                    <text x="409" y="801">&lt;-4.03</text>
                </g>
                <circle cx="354" cy="784" r="11" fill="#f02424"/>
                <circle cx="810" cy="784" r="11" fill="#f02424"/>
            </svg>
            <div class="tools">
                ${this.tool ("最左", "M18 2L1 20L18 38M31 2L14 20L31 38")}
                ${this.tool ("缩小", "M0 20H40")}
                ${this.tool ("放大", "M0 20H40M20 0V40")}
                ${this.tool ("前移", "M27 2L9 20L27 38")}
                ${this.tool ("后移", "M13 2L31 20L13 38", true)}
                ${this.tool ("全屏", "M2 18V2H18M2 2L17 17M38 22V38H22M38 38L23 23")}
            </div>
        `;
    }
}

class VolumeChart extends BaseElement {

    styles () {
        return `
            :host { padding: 0 12px; }
            .plot { width: 100%; height: auto; }
        `;
    }

    ticks () {
        let out = "";
        for (let i = 17; i <= 102; i++) {
            const big = [32, 67, 102].includes (i);
            const fade = Math.min (1, (i - 16) / 6);
            out += `<path d="M${dayX (i)} 295V${big ? 312 : 305}" stroke="#777" stroke-width="${big ? 4 : 2}" opacity="${fade}"/>`;
        }
        return out;
    }

    markup () {
        return `
            <svg class="plot" viewBox="0 0 1236 394">
                <rect y="292" width="1236" height="102" fill="#f7f8fa"/>
                <path d="M1 293V1H1235V293Z" fill="none" stroke="#e3e3e3" stroke-width="2"/>
                <text x="1" y="52" font-size="42" fill="#888">714.5万</text>
                ${volumeShapes ()}
                ${linePath (vol5, "#ec9a22")}
                ${linePath (vol10, "#cb2dcb")}
                ${linePath (vol20, "#188a18")}
                ${this.ticks ()}
                <g font-size="42" fill="#666">
                    <text x="5" y="352">20250722</text>
                    <text x="390" y="352" text-anchor="middle">20250904</text>
                    <text x="810" y="352" text-anchor="middle">20251031</text>
                    <text x="1232" y="352" text-anchor="end">20251219</text>
                </g>
            </svg>
        `;
    }
}

/* ---------- bottom ---------- */

class AskBar extends BaseElement {

    styles () {
        return `
            :host { padding: 34px 42px 56px; background: linear-gradient(#fff1ec, #fff 85%); }
            form { display: flex; align-items: center; padding: 15px 26px; border: 3px solid transparent; border-radius: 28px;
                background: linear-gradient(#fff, #fff) padding-box, linear-gradient(#f1c8c0, #dfe5f1) border-box; }
            input { flex: 1; min-width: 0; margin: 0 10px 0 36px; padding: 0 0 3px; border: 0; outline: 0; background: none; font: 49px/72px "Noto Sans CJK SC", sans-serif; }
            input::placeholder { color: #999; opacity: 1; }
            button { display: flex; align-items: center; justify-content: center; width: 98px; height: 98px; border-radius: 50%; background: linear-gradient(45deg, #ff5500 45%, #ff9a50); }
        `;
    }

    markup () {
        return `
            <form onsubmit="return false">
                <svg width="114" height="54" viewBox="0 0 114 54">
                    <defs><linearGradient id="ask" x2="1"><stop stop-color="#f05a12"/><stop offset=".5" stop-color="#f8601c"/><stop offset="1" stop-color="#ff8a58"/></linearGradient></defs>
                    <text x="-4" y="48" font-size="57" font-weight="700" font-style="italic" fill="url(#ask)">问Ai</text>
                </svg>
                <input type="text" aria-label="问Ai" placeholder="大众公用控股股东质押股份有何影响?">
                <button aria-label="发送"><svg width="50" height="42" viewBox="0 0 50 42" fill="none" stroke="#fff" stroke-width="6" stroke-linecap="round" stroke-linejoin="round"><path d="M4 21H46M28 3L46 21L28 39"/></svg></button>
            </form>
        `;
    }
}

class PromoBanner extends BaseElement {

    styles () {
        return `
            :host { padding: 0 21px; }
            .pill { display: flex; align-items: center; padding: 0 44px 0 34px; border-radius: 50px 50px 42px 42px; background: #fceee5; color: var(--accent); font-size: 46px; line-height: 98px; }
            .text { margin: 0 auto 0 64px; padding-bottom: 3px; }
            button { padding-left: 19px; border-left: 2px solid #e8a070; }
        `;
    }

    markup () {
        return `
            <div class="pill">
                <svg width="54" height="46" viewBox="0 0 54 46" fill="#ea5504">
                    <path d="M0 15H5V32H0ZM10 14L38 6L48 0H54V46H49L40 38L33 38V42L27 41L26 37L18 38L17 33L10 31Z"/>
                </svg>
                <span class="text"><slot></slot></span>
                <button aria-label="关闭"><svg width="38" height="40" viewBox="0 0 38 40" stroke="#dc5c16" stroke-width="4"><path d="M2 3L36 37M36 3L2 37"/></svg></button>
            </div>
        `;
    }
}

class NavItem extends BaseElement {

    styles () {
        return `
            a { display: flex; flex-direction: column; align-items: center; gap: 13px; padding-top: 11px; color: var(--label); text-decoration: none; font-size: 40px; line-height: 60px; }
        `;
    }

    markup () {
        return `<a href="#"><slot></slot><span>${this.attr ("label")}</span></a>`;
    }
}

class BottomNav extends BaseElement {

    styles () {
        return `
            :host { background: var(--soft); border-top: 1px solid #d5d7da; }
            nav { display: grid; grid-template-columns: 321fr repeat(4, 234fr); }
            .index { display: flex; flex-direction: column; align-items: center; padding-top: 9px; color: var(--up); text-decoration: none; white-space: nowrap; }
            .points { font-size: 48px; line-height: 72px; }
            .change { display: flex; gap: 60px; font-size: 42px; line-height: 48px; padding-left: 38px; }
            .change span:first-child { color: var(--label); font-size: 40px; }
            .home { width: 40%; height: 8px; margin: 31px auto 0; border-radius: 4px; background: #bbbcbe; }
            footer { padding-bottom: 11px; }
        `;
    }

    markup () {
        return `
            <nav>
                <a class="index" href="#index">
                    <svg width="24" height="10" viewBox="0 0 24 10"><path d="M0 10L12 0L24 10Z" fill="#7d7f85"/></svg>
                    <span class="points">3890.45</span>
                    <span class="change"><span>上证</span><span>0.36%</span></span>
                </a>
                <slot></slot>
            </nav>
            <footer><div class="home"></div></footer>
        `;
    }
}

customElements.define ("status-bar", StatusBar);
customElements.define ("stock-header", StockHeader);
customElements.define ("quote-item", QuoteItem);
customElements.define ("quote-panel", QuotePanel);
customElements.define ("h-share-row", HShareRow);
customElements.define ("notice-bar", NoticeBar);
customElements.define ("period-tabs", PeriodTabs);
customElements.define ("ma-legend", MaLegend);
customElements.define ("volume-legend", VolumeLegend);
customElements.define ("kline-chart", KlineChart);
customElements.define ("volume-chart", VolumeChart);
customElements.define ("ask-bar", AskBar);
customElements.define ("promo-banner", PromoBanner);
customElements.define ("nav-item", NavItem);
customElements.define ("bottom-nav", BottomNav);
</script>
</body>
</html>
